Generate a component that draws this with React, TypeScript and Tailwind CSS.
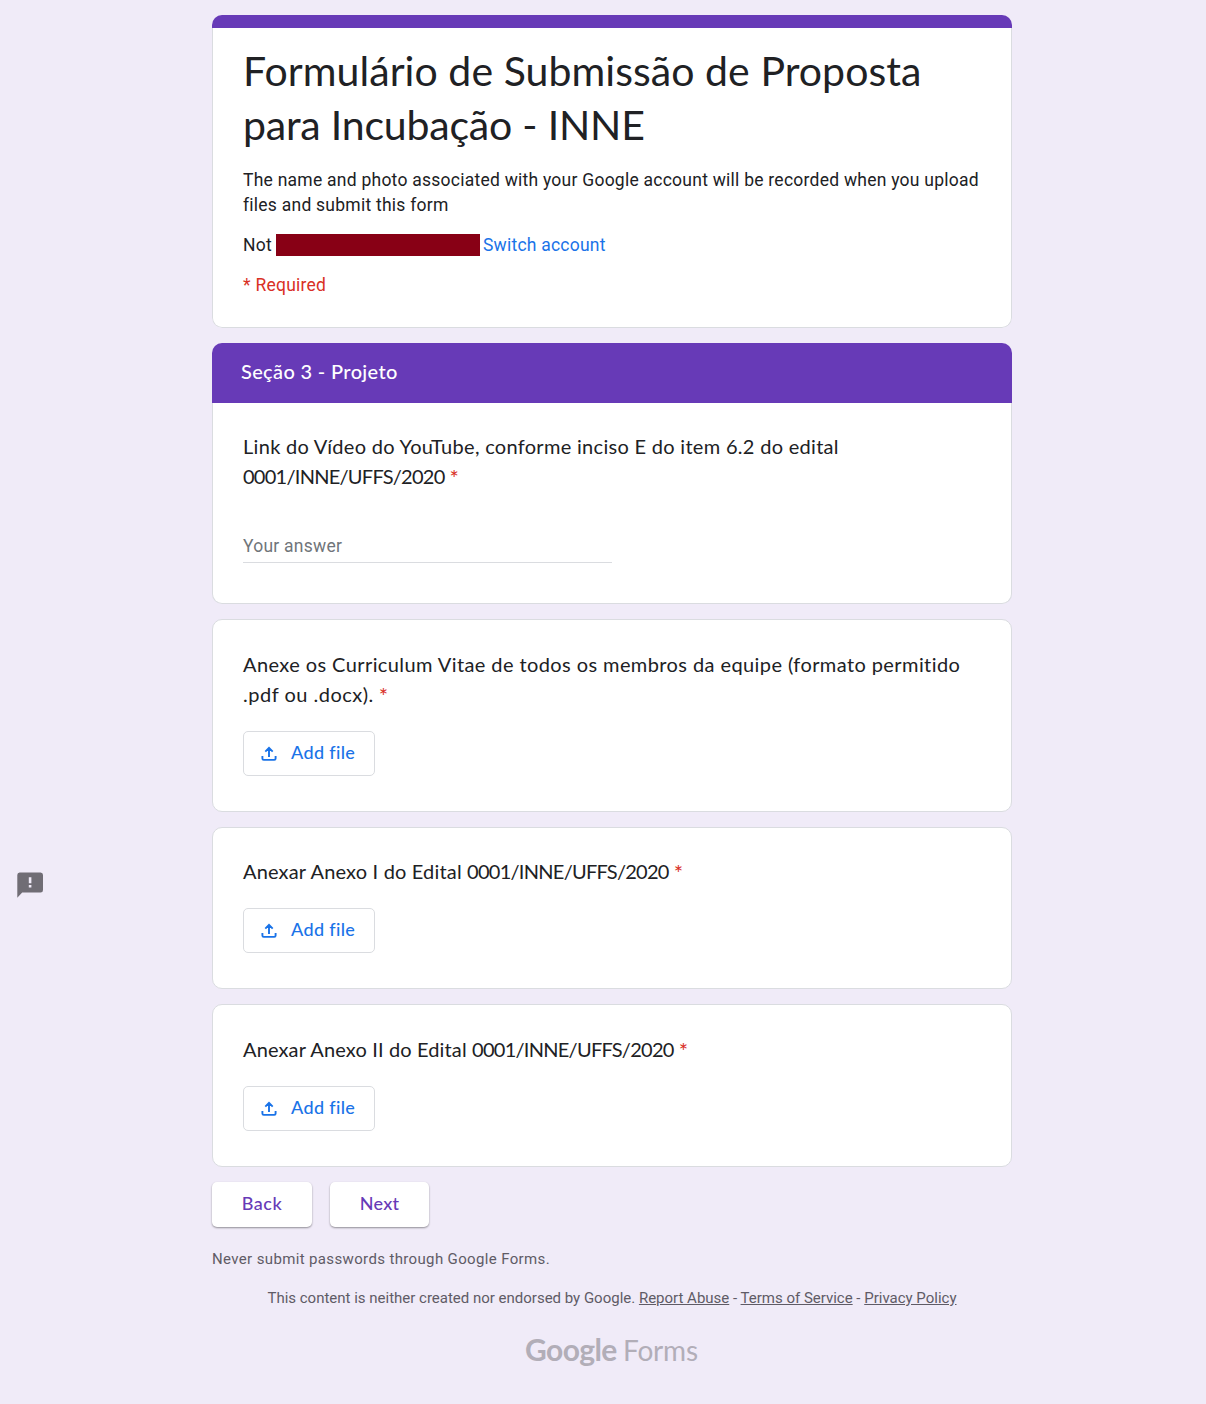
import type { ReactNode } from 'react';

const display = "font-['Lato',sans-serif]";

function Required() {
  return <span className="ml-[5px] align-[-2px] text-[22px] leading-[10px] text-[#d93025]">*</span>;
}

function Card({ className, children }: { className: string; children: ReactNode }) {
  return (
    <section className={`box-border rounded-[10px] border border-[#dadce0] bg-white px-[30px] ${className}`}>
      {children}
    </section>
  );
}

function EditalNumber() {
  return <span className="tracking-[-0.73px]">0001/INNE/UFFS/2020</span>;
}

function AddFile({ className }: { className: string }) {
  return (
    <button
      className={`${display} flex h-[45px] w-[132px] items-center rounded-[5px] border border-[#dadce0] bg-white pb-[2px] pl-[15px] text-[18px] font-medium tracking-[0.35px] text-[#1a73e8] ${className}`}
    >
      <svg className="mr-[12px] size-5" viewBox="0 0 20 20" fill="none" stroke="currentColor" strokeWidth="1.9">
        <path d="M10 14.1V4.8M6.3 8.6L10 4.9l3.7 3.7M3.4 13v2.6q0 1.3 1.3 1.3h10.6q1.3 0 1.3-1.3V13" />
      </svg>
      <span>Add file</span>
    </button>
  );
}

export default function App() {
  return (
    <div className="flex h-[1404px] w-[1206px] overflow-hidden bg-[#f0ebf8] font-['Roboto',sans-serif] text-[17.5px] tracking-[0.25px] text-[#202124]">
      <aside className="w-[212px] shrink-0 pt-[872px] pl-[17px]">
        <svg className="h-[26px] w-[26px] text-[#706d75]" viewBox="0 0 26 26" fill="currentColor">
          <path
            fillRule="evenodd"
            d="M2.6 0.5H23.4A2.5 2.5 0 0 1 26 3V18A2.5 2.5 0 0 1 23.4 20.5H5.2L0.3 25.7V3A2.5 2.5 0 0 1 2.6 0.5ZM11.8 5.3V11.2H14.4V5.3ZM11.8 13V15.6H14.4V13Z"
          />
        </svg>
      </aside>

      <main className="w-[800px] shrink-0 pt-[15px]">
        <header className="h-[313px] overflow-hidden rounded-[10px]">
          <div className="h-[13px] bg-[#673ab7]" />
          <div className="h-[300px] rounded-b-[10px] border border-t-0 border-[#dadce0] bg-white px-[30px] pt-[16px]">
            <h1 className={`${display} text-[41px] leading-[54px] whitespace-nowrap`}>
              <span className="block tracking-[0.06px]">Formulário de Submissão de Proposta</span>
              <span className="block tracking-[-0.2px]">para Incubação - INNE</span>
            </h1>
            <p className="mt-[16px] leading-[25px] tracking-[0.245px] whitespace-nowrap">
              The name and photo associated with your Google account will be recorded when you upload
              <br />
              files and submit this form
            </p>
            <div className="mt-[14px] flex h-[25px] items-center whitespace-nowrap">
              <span className="w-[33px] pt-px">Not</span>
              <span className="h-[22px] w-[204px] bg-[#880015]" />
              <a className="ml-[3px] pt-px tracking-[0.22px] text-[#1a73e8]">Switch account</a>
            </div>
            <p className="mt-[16px] leading-[25px] text-[#d93025]">* Required</p>
          </div>
        </header>

        <section className="mt-[15px] h-[261px]">
          <h2
            className={`${display} flex h-[60px] items-center rounded-t-[10px] bg-[#673ab7] pb-[4px] pl-[29px] text-[20px] font-medium tracking-[0.35px] text-white`}
          >
            Seção 3 - Projeto
          </h2>
          <div className="h-[201px] rounded-b-[10px] border border-t-0 border-[#dadce0] bg-white px-[30px] pt-[28px]">
            <p className={`${display} text-[20px] leading-[30px] whitespace-nowrap`}>
              <span className="block tracking-[0.3px]">
                Link do Vídeo do YouTube, conforme inciso E do item 6.2 do edital
              </span>
              <span className="block tracking-[0px]">
                <EditalNumber />
                <Required />
              </span>
            </p>
            <div className="mt-[42px] h-[30px] w-[369px] border-b border-[#dadce0] leading-[26px] text-[#70757a]">
              Your answer
            </div>
          </div>
        </section>

        <Card className="mt-[15px] h-[193px] pt-[29px]">
          <p className={`${display} text-[20px] leading-[30px] whitespace-nowrap`}>
            <span className="block tracking-[0.41px]">
              Anexe os Curriculum Vitae de todos os membros da equipe (formato permitido
            </span>
            <span className="block tracking-[0.5px]">
              .pdf ou .docx).
              <Required />
            </span>
          </p>
          <AddFile className="mt-[22px]" />
        </Card>

        <Card className="mt-[15px] h-[162px] pt-[28px]">
          <p className={`${display} text-[20px] leading-[30px] tracking-[0.17px] whitespace-nowrap`}>
            Anexar Anexo I do Edital <EditalNumber />
            <Required />
          </p>
          <AddFile className="mt-[22px]" />
        </Card>

        <Card className="mt-[15px] h-[163px] pt-[29px]">
          <p className={`${display} text-[20px] leading-[30px] tracking-[0.14px] whitespace-nowrap`}>
            Anexar Anexo II do Edital <EditalNumber />
            <Required />
          </p>
          <AddFile className="mt-[22px]" />
        </Card>

        <nav className={`${display} mt-[15px] flex gap-[18px] text-[18px] font-medium text-[#673ab7]`}>
          <button className="h-[45px] w-[100px] rounded-[5px] bg-white pb-[2px] tracking-[0.55px] shadow-[0_1px_2px_rgba(0,0,0,0.4)]">
            Back
          </button>
          <button className="h-[45px] w-[99px] rounded-[5px] bg-white pb-[2px] shadow-[0_1px_2px_rgba(0,0,0,0.4)]">
            Next
          </button>
        </nav>

        <footer className="text-[#5f5b66]">
          <p className="mt-[21px] text-[15px] leading-[22px] tracking-[0.36px]">
            Never submit passwords through Google Forms.
          </p>
          <p className="mt-[18px] text-center text-[15px] leading-[20px] tracking-[-0.005px] whitespace-nowrap">
            This content is neither created nor endorsed by Google. <a className="underline">Report Abuse</a> -{' '}
            <a className="underline">Terms of Service</a> - <a className="underline">Privacy Policy</a>
          </p>
          <div className={`${display} mt-[23px] flex items-baseline pl-[313px] leading-[36px] text-[#b2aeb8]`}>
            <span className="w-[98px] text-[30px] font-bold tracking-[-0.6px]">Google</span>
            <span className="text-[28px] tracking-[-0.2px]">Forms</span>
          </div>
        </footer>
      </main>
    </div>
  );
}
